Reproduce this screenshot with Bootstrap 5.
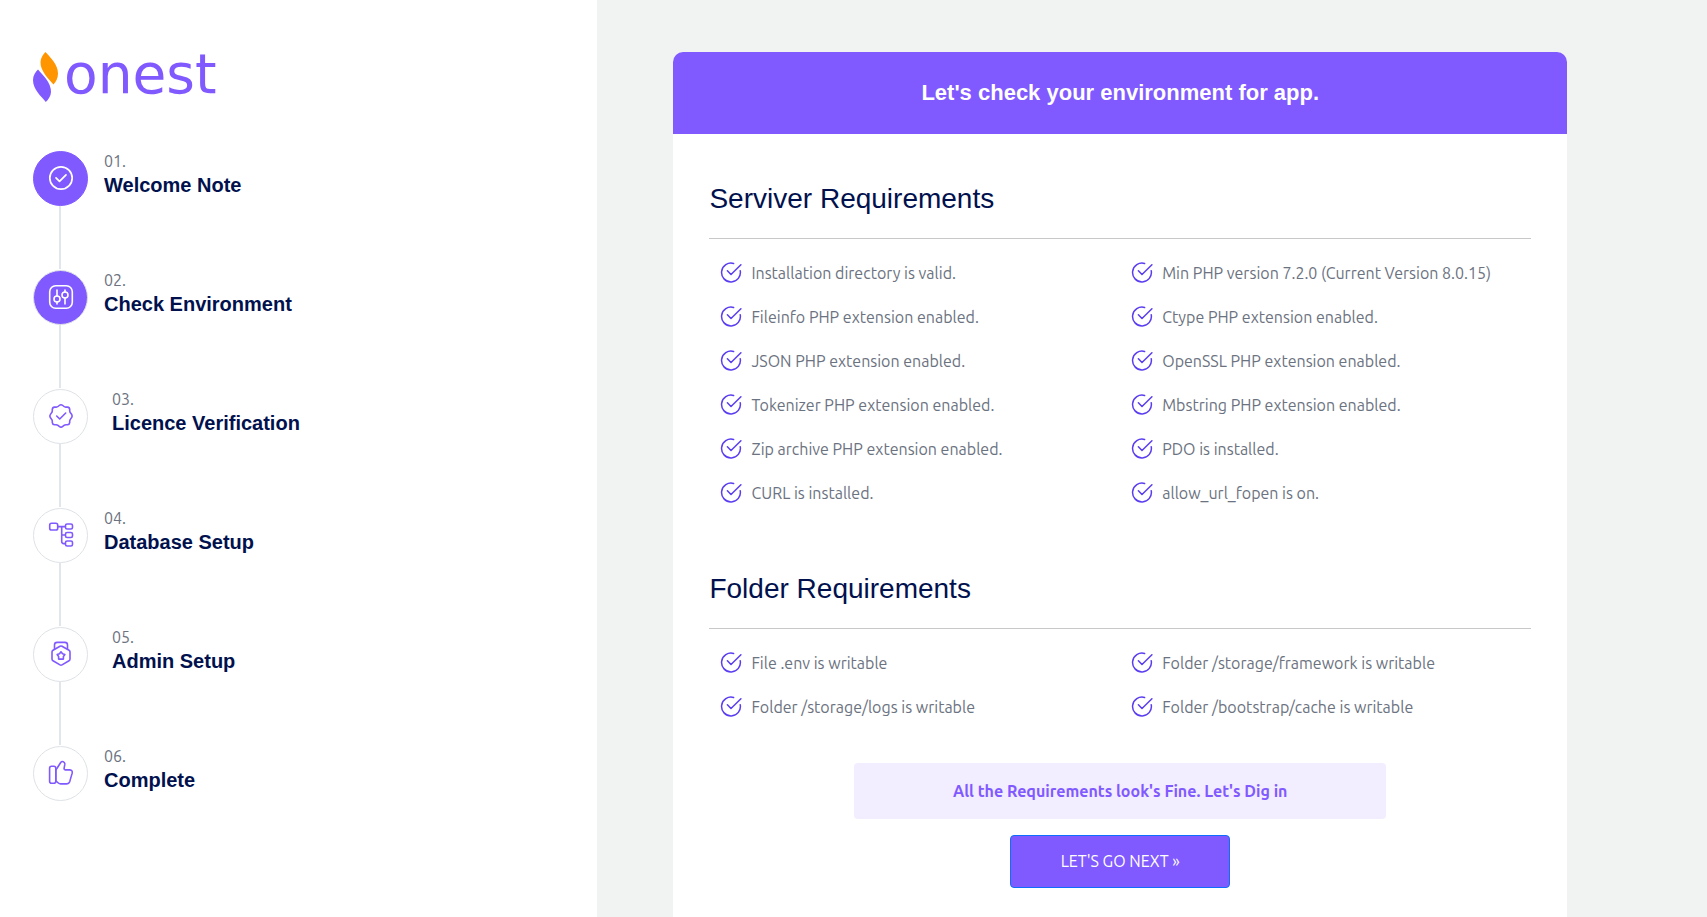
<!DOCTYPE html>
<html lang="en">
<head>
<meta charset="utf-8">
<meta name="viewport" content="width=device-width, initial-scale=1">
<title>Onest installer - Check Environment</title>
<link href="https://cdn.jsdelivr.net/npm/bootstrap@5.3.0/dist/css/bootstrap.min.css" rel="stylesheet">
<style>
  :root { --brand: #8059ff; --ink: #00114e; --muted: #6b7280; --rule: #e1e5ec; }
  body { font-family: Ubuntu, "Noto Sans", sans-serif; font-size: 16px; line-height: 24px; color: var(--muted); background: #f0f3f2; }
  h1, h2, h3 { font-family: "Liberation Sans", Arial, sans-serif; color: var(--ink); margin: 0; }
  .side-panel { width: 35%; padding: 52px 33px; }
  .logo-link { height: 50px; margin-bottom: 49px; color: var(--brand); }
  .logo-link svg { display: block; overflow: visible; }
  .step-item { min-height: 119px; }
  .step-item:last-child { min-height: 55px; }
  .step-rail { width: 55px; }
  .step-dot { width: 55px; height: 55px; border: 1px solid #dee2e6; color: var(--brand); }
  .step-dot.filled { background: var(--brand); color: #fff; }
  .step-dot.done { border-color: var(--brand); }
  .step-dot svg { width: 26px; height: 26px; margin-left: 1px; margin-bottom: 1px; }
  .step-line { width: 2px; background: var(--rule); margin-right: 1px; margin-bottom: 1px; }
  .step-item:last-child .step-line { display: none; }
  .step-copy { margin-left: 16px; margin-top: -2px; }
  .step-copy.wide { margin-left: 24px; }
  .step-copy h3 { font-size: 20px; line-height: 24px; font-weight: 700; }
  .content-area { padding: 52px 140px 0 76px; }
  .env-card { border-radius: 10px 10px 0 0; overflow: hidden; }
  .env-head { background: var(--brand); padding: 28px; }
  .env-head h1 { color: #fff; font-size: 22px; line-height: 26px; font-weight: 700; }
  .env-body { padding: 48px 36px 20px; }
  .env-body h2 { font-size: 28px; line-height: 34px; font-weight: 400; }
  .req-list { border-top: 1px solid #c8c8c8; margin-top: 22px; padding-top: 12px; }
  .req-list li { height: 44px; padding-left: 11px; gap: 9px; }
  .req-list span { padding-bottom: 1px; }
  .env-body .folder-block { margin-top: 57px; }
  .notice { max-width: 532px; padding: 16px; margin-top: 34px; background: #f2edff; color: var(--brand); border-radius: 4px; font-weight: 700; }
  .next-btn { width: 220px; height: 53px; margin-top: 16px; padding: 0 0 2px; background: var(--brand); border: 1px solid #0d6efd; border-radius: 4px; color: #fff; font-size: 16px; }
  .next-btn:hover { background: #6c45ee; color: #fff; }
  @media (max-width: 991px) {
    .side-panel { width: 100%; }
    .content-area { padding: 24px; }
  }
</style>
</head>
<body>
<svg class="d-none" aria-hidden="true">
  <symbol id="tick" viewBox="0 0 22 22">
    <path d="M13.600 1.500A9.400 9.400 0 1 0 20.200 8.700M7.400 8.800l3.600 3.700L20.900 2.800" fill="none" stroke="#5a3df0" stroke-width="1.500" stroke-linecap="round" stroke-linejoin="round"/>
  </symbol>
</svg>
<div class="d-flex flex-column flex-lg-row min-vh-100">
  <aside class="side-panel bg-white flex-shrink-0">
    <a class="logo-link d-block text-decoration-none" href="#" aria-label="onest">
      <svg width="186" height="50" viewBox="0 0 186 50">
        <path d="M12.500 0C17 5.500 25 12 25 21.500C25 26 23 30 20.500 32.500C17 28.500 7 19 7.500 10C7.700 6 10 2.500 12.500 0Z" fill="#ff9500"/>
        <path d="M5 17.500C9 22 18.500 31 18 40C17.800 44 15.500 47.500 12.800 50C8.500 44.500 0 37.500 0 28C0 23.500 2.500 20 5 17.500Z" fill="#8059ff"/>
        <text x="31" y="41" font-family="DejaVu Sans, sans-serif" font-size="55" fill="#8059ff">onest</text>
      </svg>
    </a>
    <ol class="list-unstyled mb-0">
      <li class="step-item d-flex">
        <div class="step-rail d-flex flex-column align-items-center">
          <div class="step-dot filled done rounded-circle d-flex align-items-center justify-content-center flex-shrink-0">
            <svg viewBox="0 0 26 26" fill="none" stroke="currentColor" stroke-width="1.700" stroke-linecap="round" stroke-linejoin="round"><circle cx="13" cy="13" r="11.200"/><path d="M8 12.800l3.500 3.500 6.500-6.500"/></svg>
          </div>
          <div class="step-line flex-grow-1"></div>
        </div>
        <div class="step-copy"><div>01.</div><h3>Welcome Note</h3></div>
      </li>
      <li class="step-item d-flex">
        <div class="step-rail d-flex flex-column align-items-center">
          <div class="step-dot filled rounded-circle d-flex align-items-center justify-content-center flex-shrink-0">
            <svg viewBox="0 0 26 26" fill="none" stroke="currentColor" stroke-width="1.600" stroke-linecap="round"><rect x="1.700" y="1.700" width="22.600" height="22.600" rx="6"/><circle cx="9" cy="15" r="3"/><circle cx="17" cy="11" r="3"/><path d="M9 6v6M9 18v2M17 6v2M17 14v6"/></svg>
          </div>
          <div class="step-line flex-grow-1"></div>
        </div>
        <div class="step-copy"><div>02.</div><h3>Check Environment</h3></div>
      </li>
      <li class="step-item d-flex">
        <div class="step-rail d-flex flex-column align-items-center">
          <div class="step-dot rounded-circle d-flex align-items-center justify-content-center flex-shrink-0">
            <svg viewBox="0 0 26 26" fill="none" stroke="currentColor" stroke-width="1.600" stroke-linecap="round" stroke-linejoin="round"><path d="M11.200 2.500q1.800-1.500 3.600 0l1.200 1q.8.700 2 .6h1.500q2 .1 2.200 2.200v1.500q0 1.200.7 2l1 1.300q1.400 1.900 0 3.800l-1 1.300q-.7.800-.7 2v1.400q-.2 2-2.200 2.200H18q-1.200 0-2 .6l-1.200 1q-1.800 1.500-3.600 0l-1.200-1q-.8-.6-2-.6H6.500q-2-.2-2.200-2.200v-1.400q0-1.200-.7-2l-1-1.300q-1.400-1.900 0-3.800l1-1.300q.7-.8.7-2V6.300q.2-2.100 2.200-2.200H8q1.200.1 2-.6z"/><path d="M8.700 13l3 3 6-6"/></svg>
          </div>
          <div class="step-line flex-grow-1"></div>
        </div>
        <div class="step-copy wide"><div>03.</div><h3>Licence Verification</h3></div>
      </li>
      <li class="step-item d-flex">
        <div class="step-rail d-flex flex-column align-items-center">
          <div class="step-dot rounded-circle d-flex align-items-center justify-content-center flex-shrink-0">
            <svg viewBox="0 0 26 26" fill="none" stroke="currentColor" stroke-width="1.600" stroke-linejoin="round"><rect x="1.700" y="1.200" width="8" height="6.800" rx="1.800"/><rect x="17.500" y="2" width="7" height="5" rx="1.600"/><rect x="17.500" y="10.500" width="7" height="5" rx="1.600"/><rect x="17.500" y="19" width="7" height="5" rx="1.600"/><path d="M9.700 4.600h7.800M13.700 4.600v15q0 2 2 2h1.800M13.700 13h3.800"/></svg>
          </div>
          <div class="step-line flex-grow-1"></div>
        </div>
        <div class="step-copy"><div>04.</div><h3>Database Setup</h3></div>
      </li>
      <li class="step-item d-flex">
        <div class="step-rail d-flex flex-column align-items-center">
          <div class="step-dot rounded-circle d-flex align-items-center justify-content-center flex-shrink-0">
            <svg viewBox="0 0 26 26" fill="none" stroke="currentColor" stroke-width="1.600" stroke-linejoin="round" stroke-linecap="round"><path d="M12 5.300q1-.6 2 0l7 4q1 .6 1 1.800v6.800q0 1.200-1 1.800l-7 4.200q-1 .6-2 0l-7-4.200q-1-.6-1-1.800v-6.800q0-1.200 1-1.800z"/><path d="M6.500 8V4q0-2.600 2.600-2.600h7.800q2.600 0 2.600 2.600v4"/><path d="M13 10.800l1.500 2 2.400.8-1.500 2v2.500H10.600v-2.500l-1.500-2 2.400-.8z"/></svg>
          </div>
          <div class="step-line flex-grow-1"></div>
        </div>
        <div class="step-copy wide"><div>05.</div><h3>Admin Setup</h3></div>
      </li>
      <li class="step-item d-flex">
        <div class="step-rail d-flex flex-column align-items-center">
          <div class="step-dot rounded-circle d-flex align-items-center justify-content-center flex-shrink-0">
            <svg viewBox="0 0 26 26" fill="none" stroke="currentColor" stroke-width="1.600" stroke-linejoin="round" stroke-linecap="round"><rect x="1.600" y="6.300" width="6.200" height="17" rx="2"/><path d="M7.800 20.800l2.500 2.200q1 .9 2.400.9h5.600q2.600 0 3.500-2.500l2.300-8q.8-3.200-2.300-3.500h-4.500q-1.400-.2-1.200-1.600l.7-3.900q.2-2-1.500-2.700-1.600-.6-2.600.8L8.700 8.800q-.9 1-.9 2z"/></svg>
          </div>
          <div class="step-line flex-grow-1"></div>
        </div>
        <div class="step-copy"><div>06.</div><h3>Complete</h3></div>
      </li>
    </ol>
  </aside>
  <main class="content-area flex-grow-1 d-flex flex-column">
    <section class="env-card bg-white flex-grow-1">
      <header class="env-head text-center"><h1>Let's check your environment for app.</h1></header>
      <div class="env-body">
        <h2>Serviver Requirements</h2>
        <ul class="req-list list-unstyled row g-0 mb-0">
          <li class="col-12 col-md-6 d-flex align-items-center"><svg width="22" height="22"><use href="#tick"/></svg><span>Installation directory is valid.</span></li>
          <li class="col-12 col-md-6 d-flex align-items-center"><svg width="22" height="22"><use href="#tick"/></svg><span>Min PHP version 7.2.0 (Current Version 8.0.15)</span></li>
          <li class="col-12 col-md-6 d-flex align-items-center"><svg width="22" height="22"><use href="#tick"/></svg><span>Fileinfo PHP extension enabled.</span></li>
          <li class="col-12 col-md-6 d-flex align-items-center"><svg width="22" height="22"><use href="#tick"/></svg><span>Ctype PHP extension enabled.</span></li>
          <li class="col-12 col-md-6 d-flex align-items-center"><svg width="22" height="22"><use href="#tick"/></svg><span>JSON PHP extension enabled.</span></li>
          <li class="col-12 col-md-6 d-flex align-items-center"><svg width="22" height="22"><use href="#tick"/></svg><span>OpenSSL PHP extension enabled.</span></li>
          <li class="col-12 col-md-6 d-flex align-items-center"><svg width="22" height="22"><use href="#tick"/></svg><span>Tokenizer PHP extension enabled.</span></li>
          <li class="col-12 col-md-6 d-flex align-items-center"><svg width="22" height="22"><use href="#tick"/></svg><span>Mbstring PHP extension enabled.</span></li>
          <li class="col-12 col-md-6 d-flex align-items-center"><svg width="22" height="22"><use href="#tick"/></svg><span>Zip archive PHP extension enabled.</span></li>
          <li class="col-12 col-md-6 d-flex align-items-center"><svg width="22" height="22"><use href="#tick"/></svg><span>PDO is installed.</span></li>
          <li class="col-12 col-md-6 d-flex align-items-center"><svg width="22" height="22"><use href="#tick"/></svg><span>CURL is installed.</span></li>
          <li class="col-12 col-md-6 d-flex align-items-center"><svg width="22" height="22"><use href="#tick"/></svg><span>allow_url_fopen is on.</span></li>
        </ul>
        <h2 class="folder-block">Folder Requirements</h2>
        <ul class="req-list list-unstyled row g-0 mb-0">
          <li class="col-12 col-md-6 d-flex align-items-center"><svg width="22" height="22"><use href="#tick"/></svg><span>File .env is writable</span></li>
          <li class="col-12 col-md-6 d-flex align-items-center"><svg width="22" height="22"><use href="#tick"/></svg><span>Folder /storage/framework is writable</span></li>
          <li class="col-12 col-md-6 d-flex align-items-center"><svg width="22" height="22"><use href="#tick"/></svg><span>Folder /storage/logs is writable</span></li>
          <li class="col-12 col-md-6 d-flex align-items-center"><svg width="22" height="22"><use href="#tick"/></svg><span>Folder /bootstrap/cache is writable</span></li>
        </ul>
        <p class="notice mx-auto mb-0 text-center">All the Requirements look's Fine. Let's Dig in</p>
        <div class="text-center"><button type="button" class="btn next-btn">LET'S GO NEXT »</button></div>
      </div>
    </section>
  </main>
</div>
<script src="https://cdn.jsdelivr.net/npm/bootstrap@5.3.0/dist/js/bootstrap.bundle.min.js"></script>
</body>
</html>
